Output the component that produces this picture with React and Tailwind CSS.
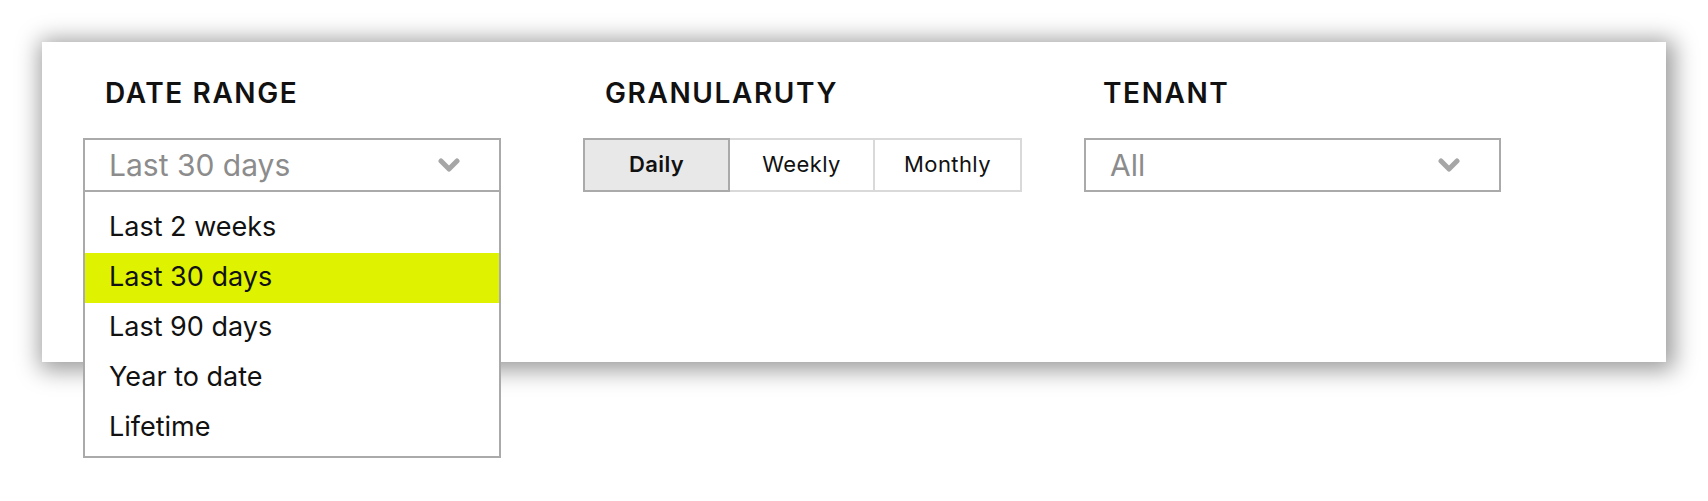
const ranges = ["Last 2 weeks", "Last 30 days", "Last 90 days", "Year to date", "Lifetime"];

function Chevron() {
  return (
    <svg width="22" height="14" viewBox="0 0 22 14" className="shrink-0">
      <path d="M3 3 L11 11 L19 3" fill="none" stroke="#a6a6a6" strokeWidth="5" strokeLinecap="round" strokeLinejoin="round" />
    </svg>
  );
}

function Label({ children, pad = "pl-[22px]" }) {
  return <div className={pad + " text-[28px] leading-[34px] font-semibold text-[#111] tracking-[1.6px]"}>{children}</div>;
}

function SelectBox({ value }) {
  return (
    <div className="flex h-[54px] items-center justify-between border-2 border-[#aaaaaa] bg-white pl-[24px] pr-[39px]">
      <span className="text-[30px] leading-[50px] text-[#8c8c8c]">{value}</span>
      <Chevron />
    </div>
  );
}

export default function App() {
  const selected = "Last 30 days";
  return (
    <div className="h-[501px] w-full bg-white pt-[42px] pl-[42px] font-['Inter','Noto_Sans',sans-serif]">
      <div className="h-[320px] w-[1624px] bg-white pl-[41px] pt-[34px] shadow-[3px_3px_22px_5px_rgba(0,0,0,0.4)]">
        <div className="flex">
          <div className="w-[418px]">
            <Label>DATE RANGE</Label>
            <div className="relative mt-[28px]">
              <SelectBox value={selected} />
              <div className="absolute left-0 right-0 top-[52px] z-10 border-2 border-[#aaaaaa] bg-white pt-[11px] pb-[3px]">
                {ranges.map((r) => (
                  <div
                    key={r}
                    className={
                      r === selected
                        ? "h-[50px] bg-[#dff200] pl-[24px] pb-[2px] text-[27px] leading-[48px] text-[#111]"
                        : "h-[50px] pl-[24px] pb-[2px] text-[27px] leading-[48px] text-[#111]"
                    }
                  >
                    {r}
                  </div>
                ))}
              </div>
            </div>
          </div>

          <div className="ml-[82px] w-[439px]">
            <Label>GRANULARUTY</Label>
            <div className="mt-[28px] flex h-[54px] tracking-[0.4px]">
              <div className="flex w-[147px] items-center justify-center border-2 border-[#aaaaaa] bg-[#e8e8e8] pb-[1px] text-[22px] font-semibold text-[#111]">Daily</div>
              <div className="flex w-[145px] items-center justify-center border-y-2 border-r-2 border-[#d9d9d9] pb-[1px] text-[22px] text-[#111]">Weekly</div>
              <div className="flex w-[147px] items-center justify-center border-y-2 border-r-2 border-[#d9d9d9] pb-[1px] text-[22px] text-[#111]">Monthly</div>
            </div>
          </div>

          <div className="ml-[62px] w-[417px]">
            <Label pad="pl-[19px]">TENANT</Label>
            <div className="mt-[28px]">
              <SelectBox value="All" />
            </div>
          </div>
        </div>
      </div>
    </div>
  );
}
